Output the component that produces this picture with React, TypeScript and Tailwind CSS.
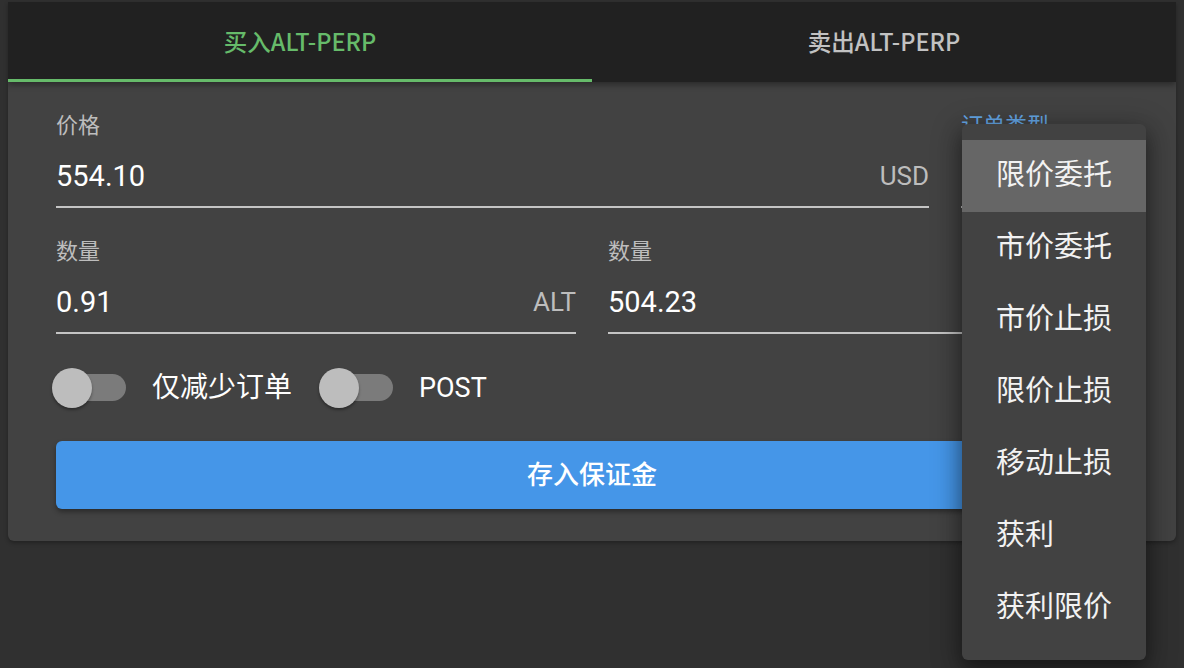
import React from 'react';

const FONT = { fontFamily: 'Roboto, "Noto Sans CJK SC", sans-serif' };

interface FieldProps {
  label: string;
  value: string;
  unit?: string;
  className?: string;
}

const Field: React.FC<FieldProps> = ({ label, value, unit, className }) => {
  return (
    <div className={className}>
      <div className="text-[22px] leading-[26px] text-[#bdbdbd]">{label}</div>
      <div className="mt-[19px] flex items-center justify-between border-b-2 border-[#c4c4c4] pb-3">
        <span className="text-[29px] leading-9 text-white">{value}</span>
        {unit && <span className="text-[26px] leading-9 text-[#bdbdbd]">{unit}</span>}
      </div>
    </div>
  );
};

const Switch: React.FC = () => (
  <div className="relative h-10 w-[74px] shrink-0">
    <div className="absolute left-2 top-[6px] h-[27px] w-[66px] rounded-full bg-[#7b7b7b]" />
    <div className="absolute left-0 top-0 h-10 w-10 rounded-full bg-[#bdbdbd] shadow-[0_2px_3px_rgba(0,0,0,0.35)]" />
  </div>
);

const orderTypes = ['限价委托', '市价委托', '市价止损', '限价止损', '移动止损', '获利', '获利限价'];

export default function App() {
  return (
    <div className="relative min-h-screen overflow-hidden bg-[#303030] px-2 pt-[2px]" style={FONT}>
      <div className="overflow-hidden rounded-b-md bg-[#424242] shadow-[0_2px_4px_rgba(0,0,0,0.3)]">
        <div className="relative z-10 flex h-20 bg-[#212121] shadow-[0_3px_6px_rgba(0,0,0,0.35)]">
          <div
            className="relative flex flex-1 items-center justify-center text-[23.5px] font-medium text-[#66bb6a]"
            style={{ fontFamily: '"Noto Sans CJK SC", sans-serif' }}
          >
            买入ALT-PERP
            <span className="absolute bottom-0 left-0 right-0 h-[3px] bg-[#66bb6a]" />
          </div>
          <div
            className="flex flex-1 items-center justify-center text-[23.5px] font-medium text-[#c2c2c2]"
            style={{ fontFamily: '"Noto Sans CJK SC", sans-serif' }}
          >
            卖出ALT-PERP
          </div>
        </div>

        <div className="px-12 pb-8 pt-[31px]">
          <div className="flex gap-8">
            <Field label="价格" value="554.10" unit="USD" className="flex-1" />
            {/* order type select, its value sits under the open menu */}
            <div className="w-[167px]">
              <div className="text-[22px] leading-[26px] text-[#64a6e6]">订单类型</div>
              <div className="mt-[19px] h-[50px] border-b-2 border-[#c4c4c4]" />
            </div>
          </div>

          <div className="mt-[31px] grid grid-cols-2 gap-8">
            <Field label="数量" value="0.91" unit="ALT" />
            <Field label="数量" value="504.23" />
          </div>

          <div className="-ml-1 mt-[34px] flex items-center">
            <Switch />
            <span className="ml-[26px] text-[28px] leading-10 text-white">仅减少订单</span>
            <div className="ml-[27px]">
              <Switch />
            </div>
            <span className="ml-[26px] text-[27px] leading-10 text-white">POST</span>
          </div>

          <button className="mt-[33px] flex h-[68px] w-full items-center justify-center rounded-md bg-[#4596e8] text-[26px] font-medium text-white shadow-[0_3px_5px_rgba(0,0,0,0.35)]">
            存入保证金
          </button>
        </div>
      </div>

      <div className="absolute left-[962px] top-[124px] z-20 w-[184px] rounded-md bg-[#424242] py-4 shadow-[0_10px_20px_rgba(0,0,0,0.35),0_6px_28px_4px_rgba(0,0,0,0.25)]">
        {orderTypes.map((t, i) => (
          <div
            key={t}
            className={`flex h-[72px] items-center px-[34px] text-[29px] text-[#f2f2f2] ${i === 0 ? 'bg-[#666666]' : ''}`}
          >
            {t}
          </div>
        ))}
      </div>
    </div>
  );
}
